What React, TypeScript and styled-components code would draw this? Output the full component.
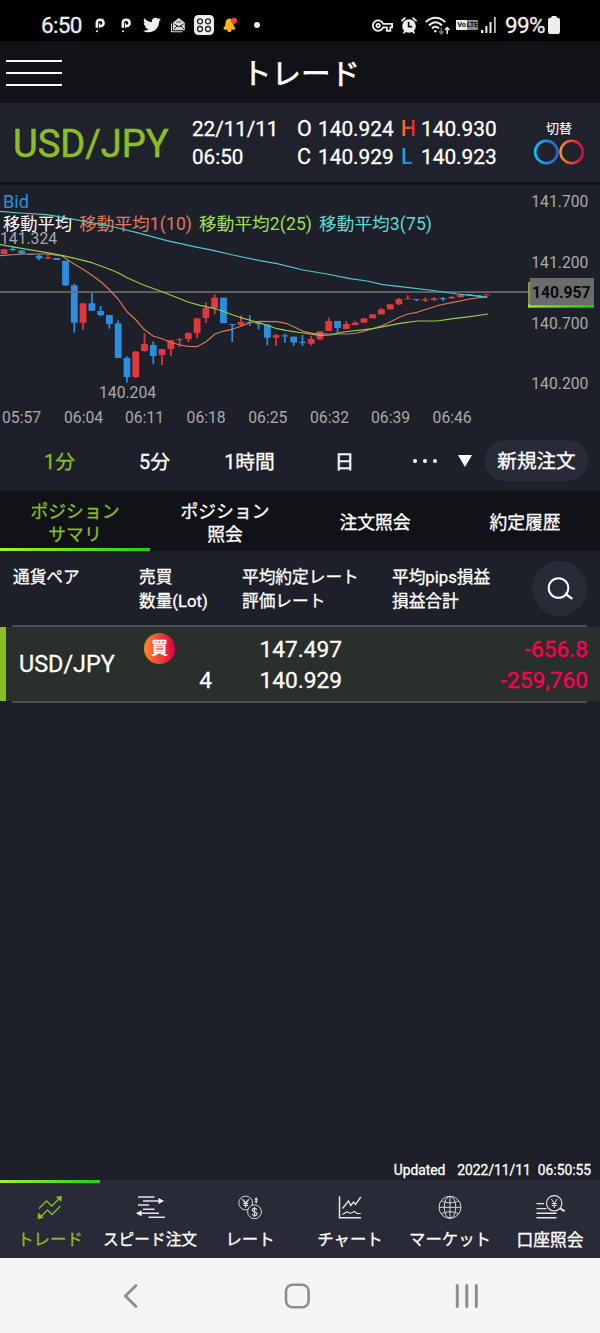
import React from "react";
import styled, { createGlobalStyle, css } from "styled-components";
import { FaTwitter } from "react-icons/fa";
import { MdOutlineVpnKey } from "react-icons/md";

const GREEN = "#8abe22";
const PANEL = "#1d2029";
const DARK = "#111217";

const GlobalStyle = createGlobalStyle`
  html, body { margin: 0; padding: 0; background: ${PANEL}; }
  body {
    font-family: Roboto, "Noto Sans CJK JP", sans-serif;
    font-weight: 400;
    -webkit-text-stroke: 0.3px currentColor;
    color: #fff;
    -webkit-font-smoothing: antialiased;
  }
  * { box-sizing: border-box; }
  svg { display: block; flex: none; -webkit-text-stroke: 0; }
`;

const Screen = styled.div`
  width: 600px;
  height: 1333px;
  display: flex;
  flex-direction: column;
  overflow: hidden;
  background: ${PANEL};
`;

const StatusBar = styled.div`
  height: 41px;
  flex: none;
  display: flex;
  align-items: center;
  justify-content: space-between;
  padding: 9px 40px 0 41px;
  background: #000;
  color: #eee;
`;

const StatusGroup = styled.div`
  display: flex;
  align-items: center;
`;

const StatusText = styled.span<{ $w: number }>`
  width: ${(p) => p.$w}px;
  font-size: 22.5px;
  line-height: 30px;
  letter-spacing: -0.7px;
  white-space: nowrap;
`;

const Slot = styled.span<{ $ml: number }>`
  display: flex;
  margin-left: ${(p) => p.$ml}px;
`;

const VoLte = styled.span`
  display: flex;
  width: 22px;
  height: 10px;
  margin-left: 6px;
  font: 700 7.5px/10px Roboto, sans-serif;
  -webkit-text-stroke: 0;
  color: #111;
`;

const VoLteHalf = styled.span<{ $lit?: boolean }>`
  flex: 1;
  text-align: center;
  letter-spacing: -0.3px;
  background: ${(p) => (p.$lit ? "#eee" : "#8a8a8a")};
`;

const Header = styled.header`
  height: 62px;
  flex: none;
  display: grid;
  grid-template-columns: 68px 1fr 68px;
  align-items: center;
  background: ${DARK};
`;

const MenuButton = styled.div`
  width: 56px;
  margin-left: 6px;
  display: flex;
  flex-direction: column;
  gap: 10px;
`;

const MenuLine = styled.span`
  height: 2px;
  background: #fff;
`;

const Title = styled.h1`
  margin: 0;
  text-align: center;
  font-size: 29.5px;
  font-weight: 400;
  -webkit-text-stroke: 0.6px #fff;
  line-height: 60px;
  padding: 3px 0 0 2px;
`;

const InfoBar = styled.section`
  height: 82px;
  flex: none;
  display: flex;
  align-items: center;
  background: #1f212b;
  border-bottom: 3px solid ${DARK};
`;

const Pair = styled.div`
  width: 179px;
  padding: 2px 0 0 13px;
  font-size: 38px;
  color: ${GREEN};
  -webkit-text-stroke: 0.6px ${GREEN};
`;

const Stamp = styled.div`
  width: 105px;
  padding: 1px 0 0 13px;
  font-size: 20.6px;
  line-height: 28px;
  white-space: nowrap;
`;

const Ohlc = styled.div`
  width: 236px;
  margin-left: 13px;
  display: grid;
  grid-template-columns: 21px 83px 20px 1fr;
  font-size: 20.8px;
  line-height: 28.5px;
  padding-top: 1px;
`;

const Letter = styled.span<{ $from?: string; $to?: string }>`
  font-size: 21.5px;
  width: max-content;
  ${(p) =>
    p.$from &&
    css`
      font-weight: 500;
      -webkit-text-stroke: 0;
      background: linear-gradient(90deg, ${p.$from}, ${p.$to});
      -webkit-background-clip: text;
      background-clip: text;
      color: transparent;
    `}
`;

const SwitchButton = styled.div`
  width: 52px;
  display: flex;
  flex-direction: column;
  align-items: center;
  gap: 1px;
  font-size: 13px;
  line-height: 18px;
  -webkit-text-stroke: 0.1px #fff;
`;

const ChartArea = styled.section`
  height: 245px;
  flex: none;
`;

const Periods = styled.div`
  height: 61px;
  flex: none;
  display: flex;
  align-items: center;
  padding-left: 12px;
  font-size: 19.8px;
`;

const Period = styled.span<{ $active?: boolean }>`
  width: 95px;
  text-align: center;
  color: ${(p) => (p.$active ? GREEN : "#fff")};
`;

const Dots = styled.span`
  width: 66px;
  display: flex;
  justify-content: center;
  gap: 6px;
`;

const Dot = styled.i`
  width: 4px;
  height: 4px;
  border-radius: 50%;
  background: #fff;
`;

const Caret = styled.i`
  margin: 0 13px 0 0;
  border: 7px solid transparent;
  border-top: 12px solid #fff;
  border-bottom: 0;
`;

const OrderButton = styled.div`
  width: 103px;
  height: 41px;
  border-radius: 21px;
  background: #282b37;
  text-align: center;
  line-height: 43px;
  font-size: 19.6px;
`;

const Tabs = styled.div`
  height: 60px;
  flex: none;
  display: grid;
  grid-template-columns: repeat(4, 150px);
  background: ${DARK};
`;

const Tab = styled.div<{ $active?: boolean }>`
  display: flex;
  align-items: center;
  justify-content: center;
  text-align: center;
  white-space: pre-line;
  font-size: 17.8px;
  line-height: 23px;
  padding-top: 3px;
  color: ${(p) => (p.$active ? GREEN : "#fff")};
  ${(p) =>
    p.$active &&
    css`
      background: linear-gradient(90deg, #a6ef2a, #19d60a) bottom / 100% 3px no-repeat;
    `}
`;

const TableHead = styled.div`
  height: 74px;
  flex: none;
  display: flex;
  padding: 15px 13px 0;
  font-size: 16.7px;
  line-height: 24px;
`;

const HeadCell = styled.div<{ $w: number }>`
  width: ${(p) => p.$w}px;
  white-space: pre;
`;

const SearchButton = styled.div`
  width: 55px;
  height: 55px;
  margin-top: -5px;
  border-radius: 50%;
  background: #282b37;
  display: flex;
  align-items: center;
  justify-content: center;
`;

const Rule = styled.hr`
  flex: none;
  width: 575px;
  height: 2px;
  margin: 0 0 0 12px;
  border: 0;
  background: #4a4d55;
`;

const PositionRow = styled.div`
  height: 74px;
  flex: none;
  display: flex;
  border-left: 6px solid ${GREEN};
  background: #292f2a;
  font-size: 22.7px;
  line-height: 31px;
  padding-top: 7px;
`;

const RowPair = styled.div`
  width: 134px;
  padding: 0 0 0 13px;
  line-height: 61px;
  font-size: 23.4px;
`;

const Side = styled.div`
  width: 72px;
  display: flex;
  flex-direction: column;
`;

const BuyBadge = styled.span`
  width: 31px;
  height: 31px;
  margin: -1px 0 1px 4px;
  border-radius: 50%;
  background: linear-gradient(90deg, #fb8b26, #dc0049);
  text-align: center;
  font-size: 16.5px;
  line-height: 32px;
  -webkit-text-stroke: 0.6px #fff;
`;

const Lot = styled.span`
  text-align: right;
`;

const Rates = styled.div`
  width: 130px;
  text-align: right;
`;

const Loss = styled.div`
  flex: 1;
  padding-right: 12px;
  text-align: right;
  color: #ff0055;
`;

const Body = styled.main`
  flex: 1;
  display: flex;
  align-items: flex-end;
  justify-content: flex-end;
  padding: 0 9px 0 0;
  font-size: 13.8px;
  line-height: 19px;
`;

const Updated = styled.span<{ $gap: number }>`
  margin-left: ${(p) => p.$gap}px;
`;

const BottomNav = styled.nav`
  height: 78px;
  flex: none;
  display: grid;
  grid-template-columns: repeat(6, 100px);
  background: #282b37;
`;

const NavItem = styled.div<{ $active?: boolean }>`
  display: flex;
  flex-direction: column;
  align-items: center;
  padding-top: 12px;
  gap: 5px;
  white-space: nowrap;
  color: ${(p) => (p.$active ? GREEN : "#fff")};
  ${(p) =>
    p.$active &&
    css`
      background: linear-gradient(90deg, #a6ef2a, #19d60a) top / 100% 3px no-repeat;
    `}
`;

const NavLabel = styled.span<{ $size?: number }>`
  font-size: ${(p) => p.$size ?? 16.4}px;
  line-height: 26px;
`;

const SystemBar = styled.div`
  height: 75px;
  flex: none;
  display: flex;
  align-items: center;
  justify-content: space-between;
  padding: 1px 121px 0 121px;
  background: #f5f5f5;
`;

/* Each candle: up flag, high, body top, body bottom, low (pixel rows of the pane). */
const candles: [number, number, number, number, number][] = [
  [1, 249.3, 249.3, 254, 254], [0, 246.7, 248.8, 250.2, 251.3], [0, 250, 250.5, 253.5, 254],
  [0, 254, 254, 255, 255], [0, 254.3, 255.7, 258.5, 260], [1, 254, 257.5, 258.7, 259],
  [0, 258, 258, 260, 260], [0, 260.5, 260.7, 285.3, 286], [0, 283.7, 285.3, 322.7, 332.7],
  [1, 303.3, 303.3, 322.7, 329.7], [0, 292.3, 303.3, 310.7, 311], [0, 306, 311, 315, 316.3],
  [0, 315, 315, 324, 328.7], [0, 320.3, 323.3, 358, 358], [0, 356.3, 358, 377, 382.7],
  [1, 351, 351.7, 377, 378], [1, 333.3, 344, 351, 352], [0, 341.3, 345, 356, 364],
  [1, 349, 349, 355, 365], [1, 340, 340.3, 349, 356], [1, 338, 339.2, 340.1, 347],
  [1, 332, 333, 339, 342], [1, 318.3, 318.3, 333, 338], [1, 302.3, 308, 318, 323],
  [1, 294.3, 297.7, 308, 314.3], [0, 297.7, 297.7, 323, 323], [0, 324, 324, 324.9, 342],
  [1, 315.3, 322, 325, 326], [0, 315.3, 322, 322.9, 326], [0, 322, 322.7, 324.3, 329.3],
  [0, 324.3, 324.5, 337.7, 345.3], [1, 334, 335.3, 337.7, 346], [0, 333.7, 335.3, 336.5, 342.7],
  [0, 336.7, 336.7, 342.3, 346], [0, 335, 341.7, 342.8, 346], [1, 336, 339, 343.7, 345.3],
  [1, 331.3, 331.3, 339.3, 340.3], [1, 317.7, 321, 331, 331], [0, 321, 321, 328, 333],
  [1, 321, 324, 329, 329.3], [1, 321.4, 322.7, 325, 325], [1, 318.3, 318.3, 322.7, 322.7],
  [1, 314.3, 314.3, 318.3, 318.3], [1, 308, 309.3, 314.3, 314.3], [1, 304.3, 304.3, 309.3, 309.3],
  [1, 298, 299, 304.3, 305], [1, 295.3, 298.5, 299.4, 299.4], [0, 299, 299, 300, 301.3],
  [1, 297.3, 299.3, 300.5, 302], [1, 297, 298.5, 300, 301], [0, 297, 298, 299, 301],
  [1, 296, 297, 298.3, 299], [1, 295, 295, 297.3, 297.3], [0, 294, 294, 295.3, 295.3],
  [0, 295, 295, 296, 296], [1, 294.3, 294.4, 295.3, 295.3],
];

const ma1 =
  "0,255.7 23,254 47,254 62,256 68,260 74,264 83,269.3 92,275.3 101,282 109,289.3 118,299 127,311.7 136,320 144,329.3 153,336 162,338.7 171,342.3 180,345 188,346.3 197,346.7 206,341.7 215,334 223,331.3 232,329.3 241,326.3 250,322.7 260,321.3 277,321.7 286,323.3 295,327.3 303,331.3 313,333.3 327,334 347,334 357,333 367,330.3 382,325.7 390,322 400,317 408,314 417,312.3 427,309 440,305 453,302.3 470,299 487,296.7";
const ma2 =
  "0,244.7 23,248.7 47,252.7 63,255.7 80,259.7 92,262.7 109,269 118,272.7 127,277.7 143,284.7 162,291.7 180,298.7 188,302 200,305.3 215,308.7 223,311.3 233,315 240,317.3 253,321 267,325.3 277,328.7 287,330.7 303,333 320,335.3 330,335 343,332 373,328.7 400,323.3 417,321 437,321 453,318.7 470,316.7 488,314";
const ma3 =
  "0,211.3 20,213 47,214.7 70,218.7 110,226 140,233.3 167,240.7 193,246.3 213,250.3 233,255 260,260.7 277,263.7 303,270 327,274 350,278.7 367,281 383,284.7 407,287.3 437,291 457,294 473,295.7 487.5,297.3";

const priceLabels: [string, number][] = [
  ["141.700", 207], ["141.200", 267.8], ["140.700", 328.7], ["140.200", 389.2],
];
const timeLabels: [string, number][] = [
  ["05:57", 2], ["06:04", 64], ["06:11", 125], ["06:18", 186.6],
  ["06:25", 248.3], ["06:32", 310], ["06:39", 371], ["06:46", 432.6],
];

function Chart() {
  return (
    <svg width="600" height="245" viewBox="0 185 600 245" fontFamily='Roboto, "Noto Sans CJK JP", sans-serif' fontWeight="400">
      <defs>
        <linearGradient id="tag" x1="0" x2="1" y1="0" y2="0">
          <stop offset="0" stopColor="#a6ef2a" />
          <stop offset="1" stopColor="#19d60a" />
        </linearGradient>
      </defs>
      <g fill="#a9a9a9" fontSize="15.7">
        {priceLabels.map(([t, y]) => <text key={t} x="531.3" y={y}>{t}</text>)}
        {timeLabels.map(([t, x]) => <text key={t} x={x} y="422.6">{t}</text>)}
        <text x="0" y="243.5">141.324</text>
        <text x="99" y="398.2">140.204</text>
      </g>
      <g fontSize="17.6">
        <text x="3" y="208.3" fontSize="18.2" fill="#2b90e0">Bid</text>
        <text x="3" y="230" fill="#fff" fontSize="17.3">移動平均</text>
        <text x="79" y="230" fill="#e0795a" textLength="113">移動平均1(10)</text>
        <text x="199" y="230" fill="#9be052" textLength="113">移動平均2(25)</text>
        <text x="319" y="230" fill="#58dcd8" textLength="113">移動平均3(75)</text>
      </g>
      {candles.map(([up, hi, top, bot, lo], i) => {
        const x = 4.1 + i * 8.775;
        return (
          <g key={i} fill={up ? "#e1383f" : "#2a8fe0"}>
            <rect x={x - 0.85} y={hi} width="1.7" height={lo - hi} />
            <rect x={x - 3.4} y={top} width="6.8" height={bot - top} />
          </g>
        );
      })}
      <rect x="0" y="291.2" width="530" height="1.7" fill="#6a6b6c" />
      <g fill="none" strokeWidth="1.2" strokeLinejoin="round">
        <polyline points={ma1} stroke="#d9775a" />
        <polyline points={ma2} stroke="#8fd04a" />
        <polyline points={ma3} stroke="#4cc9c8" />
      </g>
      <rect x="528.2" y="282" width="2" height="25.5" fill="#8abe22" />
      <rect x="528.2" y="304" width="65.8" height="3.6" fill="url(#tag)" />
      <rect x="529.7" y="278" width="64.3" height="27.4" fill="#6b6b6b" />
      <text x="532" y="297.7" fontSize="15.7" fontWeight="700" fill="#08090c">140.957</text>
    </svg>
  );
}

const PMark = () => (
  <svg width="10" height="15" viewBox="0 0 10 15" fill="none" stroke="#eee">
    <path d="M1.8 9.8V4.8C1.9 2.7 3.2 1.7 5 1.7c2.1 0 3.6 1.3 3.6 3.2 0 1.9-1.5 3.2-3.9 3.2" strokeWidth="2.5" />
    <path d="M4.4 5.3v4.5" strokeWidth="1.2" />
    <circle cx="2" cy="13.3" r="1" fill="#eee" stroke="none" />
  </svg>
);

const MailIcon = () => (
  <svg width="14" height="15" viewBox="0 0 14 15" fill="none" stroke="#ddd" strokeWidth="1.1">
    <path d="M.6 5.5v8.2h10.8" />
    <path d="M2.6 5 7.8.8 13.2 5v6.8H2.6z" fill="#ddd" />
    <path d="M3 11l3.6-3.6M12.8 11 9.2 7.4M3.2 6l4.7 3 4.6-3" stroke="#111" strokeWidth="1" />
    <path d="M5.5 4h4.6" stroke="#111" strokeWidth=".8" />
  </svg>
);

const GridIcon = () => (
  <svg width="20" height="20" viewBox="0 0 20 20">
    <rect width="20" height="20" rx="4.5" fill="#eee" />
    <g fill="none" stroke="#222" strokeWidth="1.3">
      <circle cx="6" cy="6.3" r="2.5" /><circle cx="14" cy="6.3" r="2.5" />
      <circle cx="6" cy="14" r="2.5" /><circle cx="14" cy="14" r="2.5" />
    </g>
  </svg>
);

const BellIcon = () => (
  <svg width="14" height="16" viewBox="0 0 14 16">
    <path d="M6.4 1.6c2.6.2 3.8 2.1 3.9 4.6.1 2 .6 3 1.8 4.4.5.8.1 1.9-.8 2L2 12.800c-1.200 0-2-1-1.300-2C2 9.400 2.400 8.600 2.500 6.300 2.600 3.500 4 1.700 6.400 1.600z" fill="#fdb913" />
    <circle cx="6.4" cy="13.2" r="2" fill="#fdb913" />
    <circle cx="11" cy="3.8" r="3.1" fill="#f04438" />
  </svg>
);

const AlarmIcon = () => (
  <svg width="16" height="17" viewBox="0 0 16 17">
    <g stroke="#eee" strokeWidth="1.8" strokeLinecap="round" fill="none">
      <path d="M1 3.6 3.8 1.2M15 3.6 12.2 1.2M3 15.8 4.2 14M13 15.8 11.8 14" />
    </g>
    <circle cx="8" cy="9" r="6.8" fill="#eee" />
    <path d="M7.6 5v4.6H11.2" fill="none" stroke="#000" strokeWidth="1.6" />
  </svg>
);

const WifiIcon = () => (
  <svg width="25" height="19" viewBox="0 0 25 19" fill="none" stroke="#eee" strokeWidth="1.9">
    <path d="M.8 6.2C6.5.2 14.5.2 20.2 6.2" />
    <path d="M4 9.5c4-4.3 9-4.3 13 0" />
    <path d="M7 12.5c2.2-2.4 4.8-2.4 7 0" />
    <circle cx="10.3" cy="15.2" r="1.2" fill="#eee" stroke="none" />
    <path d="M16.3 11.5v6M14 15.3l2.3 2.5 2.3-2.5" stroke="#777" strokeWidth="1.5" />
    <path d="M22.2 18v-6M20 14.1l2.2-2.5 2.2 2.5" strokeWidth="1.5" />
  </svg>
);

const SignalIcon = () => (
  <svg width="16" height="16" viewBox="0 0 16 16" fill="#eee">
    <rect x="0" y="13" width="2.4" height="3" />
    <rect x="4.4" y="9" width="2" height="7" />
    <rect x="8.5" y="5" width="2" height="11" />
    <rect x="13" y="0" width="1.8" height="16" fill="#bbb" />
  </svg>
);

const BatteryIcon = () => (
  <svg width="12" height="18" viewBox="0 0 12 18" fill="#eee">
    <rect x="3.3" y="0" width="5.4" height="4" rx="1" />
    <rect x="0" y="1.8" width="12" height="16.2" rx="2.2" />
  </svg>
);

const SwitchRings = () => (
  <svg width="52" height="27" viewBox="0 0 52 27" fill="none" strokeWidth="2.6">
    <defs>
      <linearGradient id="cool"><stop offset="0" stopColor="#00c8ff" /><stop offset="1" stopColor="#2a62d8" /></linearGradient>
      <linearGradient id="warm"><stop offset="0" stopColor="#fb8b26" /><stop offset="1" stopColor="#dc0049" /></linearGradient>
    </defs>
    <circle cx="13.3" cy="13" r="11.2" stroke="url(#cool)" />
    <circle cx="38.7" cy="13" r="11.2" stroke="url(#warm)" />
  </svg>
);

const SearchIcon = () => (
  <svg width="28" height="26" viewBox="0 0 28 26" fill="none" stroke="#fff" strokeWidth="2">
    <circle cx="12.5" cy="12" r="9.8" />
    <path d="m19 17.5 7.3 5.4" strokeWidth="2.3" />
  </svg>
);

const TradeIcon = () => (
  <svg width="26" height="30" viewBox="0 0 26 30" fill="none" stroke={GREEN} strokeWidth="1.3">
    <path d="M2 16.500 9.500 9l5.200 5L22 7" />
    <path d="M4 24.500 10.500 18l4.500 4.500L23.500 14" />
    <path d="M18.800 4.700 25 4l-.8 6z" fill={GREEN} stroke="none" />
    <path d="M1.200 20.500 6.800 26 .6 27z" fill={GREEN} stroke="none" />
  </svg>
);

const SpeedIcon = () => (
  <svg width="30" height="30" viewBox="0 0 30 30" fill="none" stroke="#e4e4e6" strokeWidth="1.5">
    <path d="M3 5h16.500M8 9h17M3 13h11M8 17.200h11.500M5 21.200h19M13.500 25.300h16.500" />
    <path d="m23.500 6 5.500 3-5.500 3zM6.500 18.200 1 21.200l5.500 3z" fill="#fff" stroke="none" />
  </svg>
);

const RateIcon = () => (
  <svg width="26" height="30" viewBox="0 0 26 30" fill="none" stroke="#d8d8dc" strokeWidth="1">
    <circle cx="8.7" cy="11" r="6.9" />
    <circle cx="17.5" cy="19.8" r="6.9" fill="#282b37" />
    <path d="M5.500 7.300 8.700 11l3.200-3.700M8.700 11v4.500M6.300 11.400h4.800M6.300 13.300h4.800" strokeWidth="1.3" />
    <path d="M19.800 17.800c-.4-1.100-1.200-1.500-2.300-1.500-1.300 0-2.200.7-2.200 1.700 0 2.500 4.700 1.200 4.700 3.800 0 1-.9 1.700-2.400 1.700-1.300 0-2.200-.5-2.500-1.700M17.500 15v10" strokeWidth="1.2" />
    <path d="m19.200 5 1.900 2.700h-3.800zM19.200 11.500 17.300 8.800h3.800z" fill="#d8d8dc" stroke="none" />
    <path d="M19.200 6v4.500" />
  </svg>
);

const ChartIcon = () => (
  <svg width="26" height="30" viewBox="0 0 26 30" fill="none" stroke="#e4e4e6" strokeWidth="1.5">
    <path d="M2.500 4.300v21.500H24" />
    <path d="M5.500 16.500 11.500 9l2.300 4.500L16.500 10l2 2.500L23.800 5" strokeWidth="1.3" />
    <path d="m5.500 22.500 4.500-2.800 3 1.800 4.500-2 2.500 2h3.800" strokeWidth="1.1" />
  </svg>
);

const GlobeIcon = () => (
  <svg width="26" height="30" viewBox="0 0 26 30" fill="none" stroke="#d8d8dc" strokeWidth="1">
    <circle cx="13" cy="15.3" r="11" />
    <ellipse cx="13" cy="15.3" rx="5.8" ry="11" />
    <path d="M13 4.300v22M2 15.300h22M4.500 8.800c5 2.700 12 2.700 17 0M4.500 21.800c5-2.700 12-2.700 17 0" />
  </svg>
);

const AccountIcon = () => (
  <svg width="30" height="30" viewBox="0 0 30 30" fill="none" stroke="#e4e4e6" strokeWidth="1.4">
    <path d="M1.500 11.600H9M1.500 16.600h10M1.500 21.200h20M1.500 25.700h20" />
    <circle cx="19.2" cy="11.3" r="7.7" strokeWidth="1.2" />
    <path d="m24.800 16.200 4.700 3" strokeWidth="2" />
    <path d="m16.300 7 3 4.200 3-4.200M19.300 11v5M16.800 11.500h5M16.800 13.500h5" strokeWidth="1" />
  </svg>
);

export default function App() {
  return (
    <>
      <GlobalStyle />
      <Screen>
        <StatusBar>
          <StatusGroup>
            <StatusText $w={42}>6:50</StatusText>
            <Slot $ml={12}><PMark /></Slot>
            <Slot $ml={16}><PMark /></Slot>
            <Slot $ml={12}><FaTwitter size={18} /></Slot>
            <Slot $ml={10}><MailIcon /></Slot>
            <Slot $ml={9}><GridIcon /></Slot>
            <Slot $ml={9}><BellIcon /></Slot>
            <Slot $ml={17}>
              <svg width="6" height="6"><circle cx="3" cy="3" r="3" fill="#eee" /></svg>
            </Slot>
          </StatusGroup>
          <StatusGroup>
            <MdOutlineVpnKey size={21} />
            <Slot $ml={8}><AlarmIcon /></Slot>
            <Slot $ml={8}><WifiIcon /></Slot>
            <VoLte><VoLteHalf $lit>Vo</VoLteHalf><VoLteHalf>LTE</VoLteHalf></VoLte>
            <Slot $ml={3}><SignalIcon /></Slot>
            <Slot $ml={8}><StatusText $w={43}>99%</StatusText></Slot>
            <BatteryIcon />
          </StatusGroup>
        </StatusBar>

        <Header>
          <MenuButton><MenuLine /><MenuLine /><MenuLine /></MenuButton>
          <Title>トレード</Title>
        </Header>

        <InfoBar>
          <Pair>USD/JPY</Pair>
          <Stamp>22/11/11<br />06:50</Stamp>
          <Ohlc>
            <Letter>O</Letter><span>140.924</span>
            <Letter $from="#f5801f" $to="#e01a4a">H</Letter><span>140.930</span>
            <Letter>C</Letter><span>140.929</span>
            <Letter $from="#10b4f0" $to="#2070e0">L</Letter><span>140.923</span>
          </Ohlc>
          <SwitchButton>切替<SwitchRings /></SwitchButton>
        </InfoBar>

        <ChartArea><Chart /></ChartArea>

        <Periods>
          <Period $active>1分</Period>
          <Period>5分</Period>
          <Period>1時間</Period>
          <Period>日</Period>
          <Dots><Dot /><Dot /><Dot /></Dots>
          <Caret />
          <OrderButton>新規注文</OrderButton>
        </Periods>

        <Tabs>
          <Tab $active>{"ポジション\nサマリ"}</Tab>
          <Tab>{"ポジション\n照会"}</Tab>
          <Tab>注文照会</Tab>
          <Tab>約定履歴</Tab>
        </Tabs>

        <TableHead>
          <HeadCell $w={126}>通貨ペア</HeadCell>
          <HeadCell $w={103}>{"売買\n数量(Lot)"}</HeadCell>
          <HeadCell $w={150}>{"平均約定レート\n評価レート"}</HeadCell>
          <HeadCell $w={140}>{"平均pips損益\n損益合計"}</HeadCell>
          <SearchButton><SearchIcon /></SearchButton>
        </TableHead>
        <Rule />
        <PositionRow>
          <RowPair>USD/JPY</RowPair>
          <Side><BuyBadge>買</BuyBadge><Lot>4</Lot></Side>
          <Rates>147.497<br />140.929</Rates>
          <Loss>-656.8<br />-259,760</Loss>
        </PositionRow>
        <Rule />

        <Body>
          <Updated $gap={0}>Updated</Updated>
          <Updated $gap={12}>2022/11/11</Updated>
          <Updated $gap={7}>06:50:55</Updated>
        </Body>

        <BottomNav>
          <NavItem $active><TradeIcon /><NavLabel>トレード</NavLabel></NavItem>
          <NavItem><SpeedIcon /><NavLabel $size={15.7}>スピード注文</NavLabel></NavItem>
          <NavItem><RateIcon /><NavLabel>レート</NavLabel></NavItem>
          <NavItem><ChartIcon /><NavLabel>チャート</NavLabel></NavItem>
          <NavItem><GlobeIcon /><NavLabel>マーケット</NavLabel></NavItem>
          <NavItem><AccountIcon /><NavLabel $size={16.8}>口座照会</NavLabel></NavItem>
        </BottomNav>

        <SystemBar>
          <svg width="18" height="26" viewBox="0 0 18 26" fill="none" stroke="#8e8e8e" strokeWidth="2.8" strokeLinecap="round" strokeLinejoin="round">
            <path d="M15 2.5 4.3 13 15 23.5" />
          </svg>
          <svg width="26" height="26" viewBox="0 0 26 26" fill="none" stroke="#8e8e8e" strokeWidth="2.6">
            <rect x="2" y="1.7" width="22.600" height="22.6" rx="6.5" />
          </svg>
          <svg width="24" height="26" viewBox="0 0 24 26" fill="none" stroke="#8e8e8e" strokeWidth="3" strokeLinecap="round">
            <path d="M2.300 2.500v21M11.800 2.500v21M21.300 2.500v21" />
          </svg>
        </SystemBar>
      </Screen>
    </>
  );
}
